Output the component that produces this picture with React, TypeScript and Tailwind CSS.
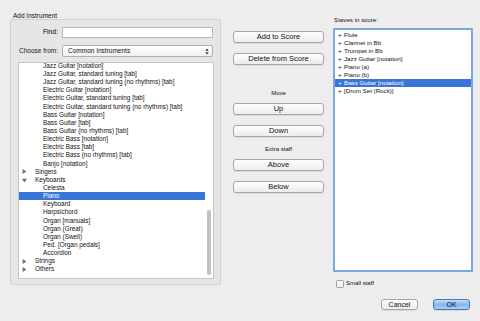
import React from "react";

type Row = { text: string; kind: "item" | "closed" | "open"; selected?: boolean };

const treeRows: Row[] = [
  { text: "Jazz Guitar [notation]", kind: "item" },
  { text: "Jazz Guitar, standard tuning [tab]", kind: "item" },
  { text: "Jazz Guitar, standard tuning (no rhythms) [tab]", kind: "item" },
  { text: "Electric Guitar [notation]", kind: "item" },
  { text: "Electric Guitar, standard tuning [tab]", kind: "item" },
  { text: "Electric Guitar, standard tuning (no rhythms) [tab]", kind: "item" },
  { text: "Bass Guitar [notation]", kind: "item" },
  { text: "Bass Guitar [tab]", kind: "item" },
  { text: "Bass Guitar (no rhythms) [tab]", kind: "item" },
  { text: "Electric Bass [notation]", kind: "item" },
  { text: "Electric Bass [tab]", kind: "item" },
  { text: "Electric Bass (no rhythms) [tab]", kind: "item" },
  { text: "Banjo [notation]", kind: "item" },
  { text: "Singers", kind: "closed" },
  { text: "Keyboards", kind: "open" },
  { text: "Celesta", kind: "item" },
  { text: "Piano", kind: "item", selected: true },
  { text: "Keyboard", kind: "item" },
  { text: "Harpsichord", kind: "item" },
  { text: "Organ [manuals]", kind: "item" },
  { text: "Organ (Great)", kind: "item" },
  { text: "Organ (Swell)", kind: "item" },
  { text: "Ped. [Organ pedals]", kind: "item" },
  { text: "Accordion", kind: "item" },
  { text: "Strings", kind: "closed" },
  { text: "Others", kind: "closed" },
];

const staves = [
  "Flute",
  "Clarinet in Bb",
  "Trumpet in Bb",
  "Jazz Guitar [notation]",
  "Piano (a)",
  "Piano (b)",
  "Bass Guitar [notation]",
  "[Drum Set (Rock)]",
];

const Disclosure = ({ open }: { open: boolean }) => (
  <svg width="5" height="5" viewBox="0 0 5 5" className="shrink-0">
    {open ? <path d="M0 0.8 L5 0.8 L2.5 4.6 Z" fill="#6f6f6f" /> : <path d="M0.6 0 L4.4 2.5 L0.6 5 Z" fill="#6f6f6f" />}
  </svg>
);

const Button = ({ label }: { label: string }) => (
  <button className="w-[91px] h-[12px] rounded-[3px] border border-[#a6a6a6] bg-gradient-to-b from-white to-[#ececec] shadow-[0_1px_0_rgba(0,0,0,0.08)] text-[7.5px] leading-none text-[#111] flex items-center justify-center">
    {label}
  </button>
);

export default function App() {
  return (
    <div
      className="w-[480px] h-[321px] bg-[#ededed] flex text-[#111] overflow-hidden"
      style={{ fontFamily: '"Liberation Sans", Arial, sans-serif' }}
    >
      {/* left: add instrument */}
      <div className="pl-[10px] pt-[12px] flex flex-col">
        <div className="text-[6.5px] leading-[7px] pl-[3px] h-[7px]">Add Instrument</div>
        <div className="w-[211px] h-[266px] border border-[#d2d2d2] rounded-[2px] bg-[#e6e6e6] flex flex-col">
          <div className="flex items-center mt-[7px]">
            <span className="w-[47px] text-right text-[6.8px] text-black">Find:</span>
            <div className="ml-[4px] w-[151px] h-[11px] bg-white border border-[#b9b9b9]" />
          </div>
          <div className="flex items-center mt-[7px]">
            <span className="w-[47px] text-right text-[6.5px] text-[#222]">Choose from:</span>
            <div className="ml-[4px] w-[151px] h-[12px] rounded-[2px] border border-[#b0b0b0] bg-gradient-to-b from-white to-[#f0f0f0] flex items-center pl-[5px] pr-[3px]">
              <span className="text-[6.5px] flex-1">Common Instruments</span>
              <svg width="4" height="7" viewBox="0 0 4 7">
                <path d="M0.3 2.8 L2 0.6 L3.7 2.8 Z M0.3 4.2 L2 6.4 L3.7 4.2 Z" fill="#333" />
              </svg>
            </div>
          </div>
          <div className="ml-[7px] mt-[5px] w-[196px] h-[217px] bg-white border border-[#c4c4c4] flex overflow-hidden">
            <div className="flex-1 flex flex-col -mt-[1px]">
              {treeRows.map((r) => (
                <div
                  key={r.text}
                  className={`h-[8.15px] shrink-0 flex items-center text-[6.4px] leading-none whitespace-nowrap ${
                    r.selected ? "bg-[#3875d7] text-white" : "text-[#111]"
                  }`}
                >
                  {r.kind === "item" ? (
                    <span className="pl-[24px]">{r.text}</span>
                  ) : (
                    <span className="pl-[3px] flex items-center">
                      <Disclosure open={r.kind === "open"} />
                      <span className="pl-[8px]">{r.text}</span>
                    </span>
                  )}
                </div>
              ))}
            </div>
            <div className="w-[8px] shrink-0 flex justify-center pt-[147px]">
              <div className="w-[4px] h-[65px] rounded-full bg-[#c2c2c2]" />
            </div>
          </div>
        </div>
      </div>

      {/* middle: actions */}
      <div className="ml-[12px] pt-[31px] w-[91px] flex flex-col items-center">
        <Button label="Add to Score" />
        <div className="mt-[10px]">
          <Button label="Delete from Score" />
        </div>
        <div className="mt-[25px] text-[6px] leading-none">Move</div>
        <div className="mt-[7px]">
          <Button label="Up" />
        </div>
        <div className="mt-[10px]">
          <Button label="Down" />
        </div>
        <div className="mt-[9px] text-[6px] leading-none">Extra staff</div>
        <div className="mt-[7px]">
          <Button label="Above" />
        </div>
        <div className="mt-[10px]">
          <Button label="Below" />
        </div>
      </div>

      {/* right: staves */}
      <div className="ml-[9px] pt-[17px] w-[140px] flex flex-col">
        <div className="text-[6.2px] leading-none pl-[1px]">Staves in score:</div>
        <div className="mt-[5px] w-[140px] h-[244px] bg-white border-2 border-[#7ba7e1] rounded-[1px] pt-[1px] flex flex-col">
          {staves.map((s) => (
            <div
              key={s}
              className={`h-[8px] shrink-0 flex items-center text-[6.2px] leading-none whitespace-nowrap pl-[3px] ${
                s === "Bass Guitar [notation]" ? "bg-[#3875d7] text-white" : "text-[#111]"
              }`}
            >
              <span className="w-[6px]">+</span>
              <span>{s}</span>
            </div>
          ))}
        </div>
        <div className="mt-[7px] flex items-center pl-[3px]">
          <div className="w-[8px] h-[8px] rounded-[1.5px] border border-[#a0a0a0] bg-gradient-to-b from-white to-[#eeeeee]" />
          <span className="ml-[2px] text-[6px]">Small staff</span>
        </div>
        <div className="mt-[11px] flex justify-end pr-[3px] gap-[15px]">
          <button className="w-[37px] h-[11px] rounded-[3px] border border-[#a6a6a6] bg-gradient-to-b from-white to-[#ececec] shadow-[0_1px_0_rgba(0,0,0,0.08)] text-[7px] leading-none flex items-center justify-center">
            Cancel
          </button>
          <button className="w-[37px] h-[11px] rounded-[3px] border border-[#4f74b3] bg-gradient-to-b from-[#c4def9] via-[#86b6ee] to-[#a9cff6] shadow-[0_1px_0_rgba(0,0,0,0.08)] text-[7px] leading-none flex items-center justify-center">
            OK
          </button>
        </div>
      </div>
    </div>
  );
}
